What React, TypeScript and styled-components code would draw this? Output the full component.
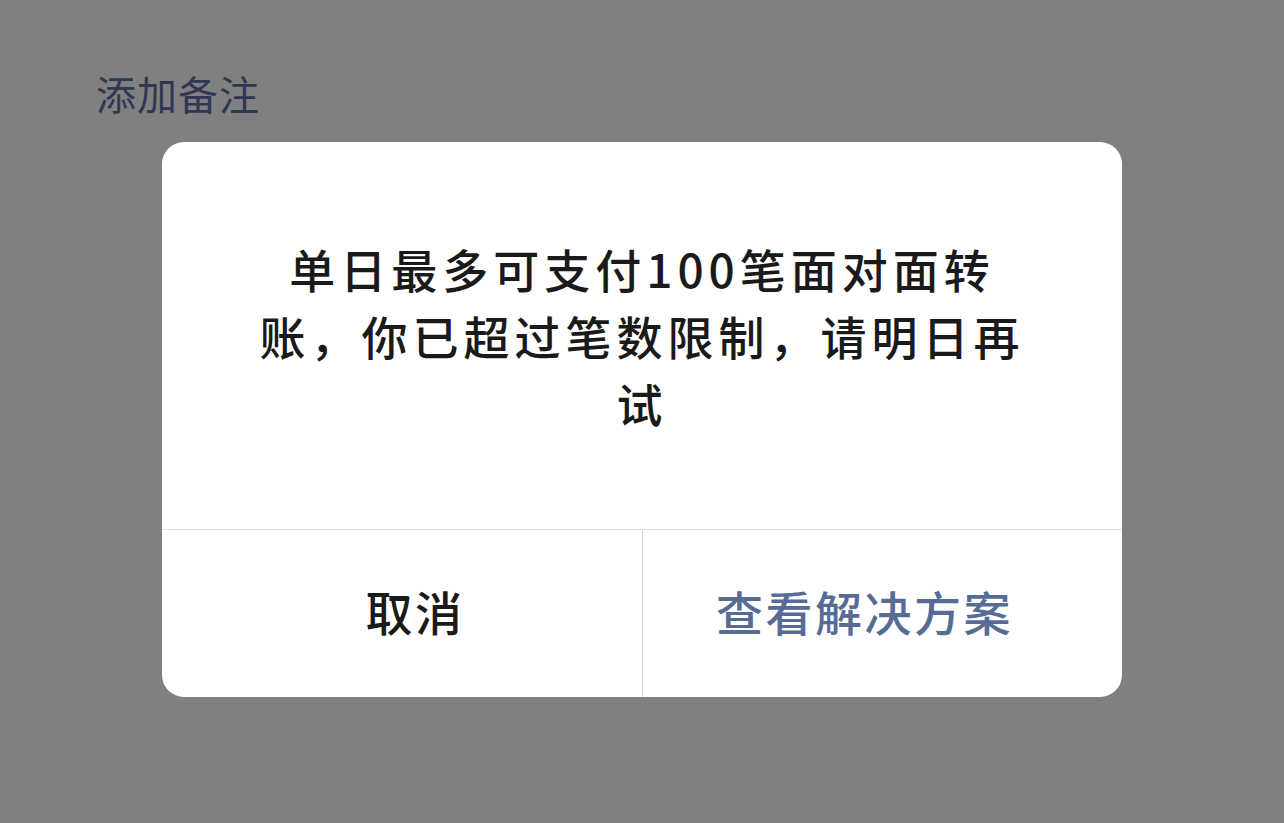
import React from "react";
import styled, { createGlobalStyle } from "styled-components";

const Global = createGlobalStyle`
  html, body { margin: 0; padding: 0; }
  body {
    background: #808080;
    font-family: "Noto Sans CJK SC", "Noto Sans", sans-serif;
  }
`;

const Page = styled.div`
  width: 1284px;
  height: 823px;
  background: #808080;
  display: flex;
  flex-direction: column;
  overflow: hidden;
`;

const Heading = styled.div`
  padding: 65px 0 0 96px;
  font-size: 40px;
  line-height: 56px;
  color: #2f3752;
  letter-spacing: 1px;
`;

const Dialog = styled.div`
  margin: 21px 0 0 162px;
  width: 960px;
  height: 555px;
  background: #fff;
  border-radius: 22px;
  display: flex;
  flex-direction: column;
  overflow: hidden;
`;

const Body = styled.div`
  flex: 1;
  display: flex;
  align-items: center;
  justify-content: center;
  padding: 0 84px;
  border-bottom: 1px solid #e2e2e2;
`;

const Message = styled.p`
  margin: 0;
  font-size: 46px;
  font-weight: 500;
  line-height: 67px;
  letter-spacing: 5px;
  color: #1a1a1a;
  text-align: center;
`;

const Actions = styled.div`
  height: 167px;
  display: grid;
  grid-template-columns: repeat(2, minmax(0, 1fr));
`;

const Action = styled.button<{ $primary?: boolean }>`
  border: none;
  background: transparent;
  font-family: inherit;
  font-size: 47px;
  letter-spacing: 2.5px;
  font-weight: 500;
  color: ${(p) => (p.$primary ? "#576b95" : "#1a1a1a")};
  padding: ${(p) => (p.$primary ? "0 36px 7px 0" : "0 0 7px 26px")};
  & + & {
    border-left: 1px solid #d6d6d6;
  }
`;

export default function App() {
  return (
    <Page>
      <Global />
      <Heading>添加备注</Heading>
      <Dialog>
        <Body>
          <Message>单日最多可支付100笔面对面转账，你已超过笔数限制，请明日再试</Message>
        </Body>
        <Actions>
          <Action>取消</Action>
          <Action $primary>查看解决方案</Action>
        </Actions>
      </Dialog>
    </Page>
  );
}
